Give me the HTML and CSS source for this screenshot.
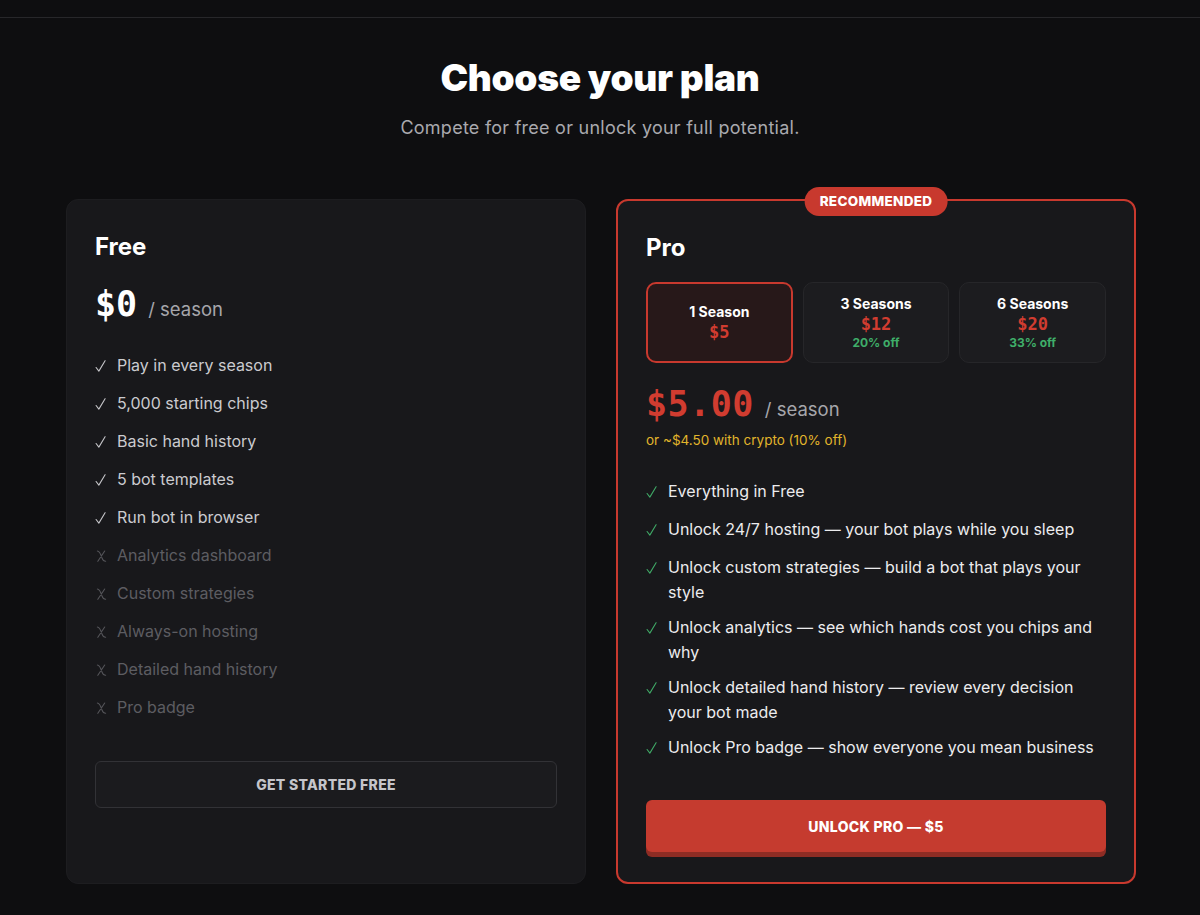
FILE: index.html
```html
<!DOCTYPE html>
<html lang="en">
<head>
<meta charset="utf-8">
<title>Choose your plan</title>
<link rel="stylesheet" href="styles.css">
</head>
<body>
<header class="topbar"></header>
<main class="main">
  <h1 class="title">Choose your plan</h1>
  <p class="subtitle">Compete for free or unlock your full potential.</p>

  <div class="plans">
    <section class="card card-free">
      <h2 class="plan-name">Free</h2>
      <div class="price-row">
        <span class="price">$0</span>
        <span class="per">/ season</span>
      </div>
      <ul class="features">
        <li class="feat"><svg class="mark" viewBox="0 0 12 14"><path d="M1.2 8.6 L4.2 12.6 L11 1.2"/></svg><span>Play in every season</span></li>
        <li class="feat"><svg class="mark" viewBox="0 0 12 14"><path d="M1.2 8.6 L4.2 12.6 L11 1.2"/></svg><span>5,000 starting chips</span></li>
        <li class="feat"><svg class="mark" viewBox="0 0 12 14"><path d="M1.2 8.6 L4.2 12.6 L11 1.2"/></svg><span>Basic hand history</span></li>
        <li class="feat"><svg class="mark" viewBox="0 0 12 14"><path d="M1.2 8.6 L4.2 12.6 L11 1.2"/></svg><span>5 bot templates</span></li>
        <li class="feat"><svg class="mark" viewBox="0 0 12 14"><path d="M1.2 8.6 L4.2 12.6 L11 1.2"/></svg><span>Run bot in browser</span></li>
        <li class="feat off"><svg class="mark" viewBox="0 0 12 14"><path d="M1.5 1.5 C4 1.5 5.5 6 6.5 9 C7.2 11 8 12.8 10.5 12.8 M9.5 1.5 L2 12.8"/></svg><span>Analytics dashboard</span></li>
        <li class="feat off"><svg class="mark" viewBox="0 0 12 14"><path d="M1.5 1.5 C4 1.5 5.5 6 6.5 9 C7.2 11 8 12.8 10.5 12.8 M9.5 1.5 L2 12.8"/></svg><span>Custom strategies</span></li>
        <li class="feat off"><svg class="mark" viewBox="0 0 12 14"><path d="M1.5 1.5 C4 1.5 5.5 6 6.5 9 C7.2 11 8 12.8 10.5 12.8 M9.5 1.5 L2 12.8"/></svg><span>Always-on hosting</span></li>
        <li class="feat off"><svg class="mark" viewBox="0 0 12 14"><path d="M1.5 1.5 C4 1.5 5.5 6 6.5 9 C7.2 11 8 12.8 10.5 12.8 M9.5 1.5 L2 12.8"/></svg><span>Detailed hand history</span></li>
        <li class="feat off"><svg class="mark" viewBox="0 0 12 14"><path d="M1.5 1.5 C4 1.5 5.5 6 6.5 9 C7.2 11 8 12.8 10.5 12.8 M9.5 1.5 L2 12.8"/></svg><span>Pro badge</span></li>
      </ul>
      <button class="btn btn-free">GET STARTED FREE</button>
    </section>

    <section class="card card-pro">
      <span class="badge">RECOMMENDED</span>
      <h2 class="plan-name">Pro</h2>
      <div class="seasons">
        <div class="season selected">
          <span class="s-name">1 Season</span>
          <span class="s-price">$5</span>
        </div>
        <div class="season">
          <span class="s-name">3 Seasons</span>
          <span class="s-price">$12</span>
          <span class="s-off">20% off</span>
        </div>
        <div class="season">
          <span class="s-name">6 Seasons</span>
          <span class="s-price">$20</span>
          <span class="s-off">33% off</span>
        </div>
      </div>
      <div class="price-row pro-price-row">
        <span class="price price-red">$5.00</span>
        <span class="per">/ season</span>
      </div>
      <p class="crypto">or ~$4.50 with crypto (10% off)</p>
      <ul class="features pro-features">
        <li class="feat"><svg class="mark" viewBox="0 0 12 14"><path d="M1.2 8.6 L4.2 12.6 L11 1.2"/></svg><span>Everything in Free</span></li>
        <li class="feat"><svg class="mark" viewBox="0 0 12 14"><path d="M1.2 8.6 L4.2 12.6 L11 1.2"/></svg><span>Unlock 24/7 hosting — your bot plays while you sleep</span></li>
        <li class="feat"><svg class="mark" viewBox="0 0 12 14"><path d="M1.2 8.6 L4.2 12.6 L11 1.2"/></svg><span>Unlock custom strategies — build a bot that plays your style</span></li>
        <li class="feat"><svg class="mark" viewBox="0 0 12 14"><path d="M1.2 8.6 L4.2 12.6 L11 1.2"/></svg><span>Unlock analytics — see which hands cost you chips and why</span></li>
        <li class="feat"><svg class="mark" viewBox="0 0 12 14"><path d="M1.2 8.6 L4.2 12.6 L11 1.2"/></svg><span>Unlock detailed hand history — review every decision your bot made</span></li>
        <li class="feat"><svg class="mark" viewBox="0 0 12 14"><path d="M1.2 8.6 L4.2 12.6 L11 1.2"/></svg><span>Unlock Pro badge — show everyone you mean business</span></li>
      </ul>
      <button class="btn btn-pro">UNLOCK PRO — $5</button>
    </section>
  </div>
</main>
</body>
</html>
```

FILE: styles.css
```css
* { box-sizing: border-box; }

html, body {
  margin: 0;
  padding: 0;
  background: #0e0e10;
  color: #e8e8ea;
  font-family: Inter, "Noto Sans", "Liberation Sans", sans-serif;
}

.topbar {
  height: 18px;
  border-bottom: 1px solid #27272a;
}

.main {
  width: 1070px;
  margin: 0 auto;
  padding-top: 38px;
  display: flex;
  flex-direction: column;
  align-items: center;
}

.title {
  margin: 0;
  font-size: 37px;
  line-height: 44px;
  font-weight: 900;
  letter-spacing: -0.3px;
  color: #ffffff;
}

.subtitle {
  margin: 14px 0 0;
  font-size: 18px;
  line-height: 28px;
  letter-spacing: 0.25px;
  color: #a9a9ae;
}

.plans {
  margin-top: 57px;
  width: calc(100% + 1px);
  align-self: flex-start;
  display: grid;
  grid-template-columns: 1fr 1fr;
  gap: 30px;
  padding-left: 1px;
}

.card {
  position: relative;
  background: #18181b;
  border: 1px solid #1d1d20;
  border-radius: 12px;
  padding: 29px 28px 30px;
  display: flex;
  flex-direction: column;
}

.card-pro {
  border: 2px solid #c8392e;
}

.badge {
  position: absolute;
  top: -14px;
  left: 50%;
  transform: translateX(-50%);
  background: #c8392e;
  color: #ffffff;
  font-size: 13.5px;
  font-weight: 800;
  letter-spacing: 0.3px;
  line-height: 29px;
  height: 29px;
  padding: 0 15px;
  border-radius: 15px;
  white-space: nowrap;
}

.plan-name {
  margin: 0;
  font-size: 24px;
  line-height: 36px;
  font-weight: 700;
  color: #ffffff;
}

.price-row {
  margin-top: 17px;
  display: flex;
  align-items: baseline;
  gap: 11px;
  height: 44px;
}

.price {
  font-family: "DejaVu Sans Mono", "Liberation Mono", monospace;
  font-size: 35px;
  line-height: 44px;
  font-weight: 700;
  color: #ffffff;
}

.price-red {
  color: #d13c30;
  letter-spacing: 0.5px;
}

.per {
  font-size: 18.5px;
  color: #a6a6ab;
}

.features {
  list-style: none;
  margin: 27px 0 0;
  padding: 0;
  display: flex;
  flex-direction: column;
  gap: 11px;
}

.feat {
  display: flex;
  align-items: flex-start;
  min-height: 27px;
  font-size: 16px;
  line-height: 24px;
  color: #cbcbcf;
}

.feat .mark {
  flex: 0 0 auto;
  width: 11px;
  height: 14px;
  margin: 6px 11px 0 0;
  fill: none;
  stroke: #c4c4c8;
  stroke-width: 1.2;
  stroke-linecap: round;
  stroke-linejoin: round;
}

.feat.off {
  color: #5d5d62;
}

.feat.off .mark {
  stroke: #55555a;
  margin-left: 1px;
  margin-right: 10px;
}

.btn {
  font-family: inherit;
  cursor: pointer;
  width: 100%;
  font-size: 14px;
  font-weight: 800;
  letter-spacing: 0.3px;
}

.btn-free {
  margin-top: 39px;
  height: 47px;
  background: #1b1b1e;
  border: 1px solid #323236;
  border-radius: 6px;
  color: #c5c5ca;
}

.seasons {
  margin-top: 16px;
  display: grid;
  grid-template-columns: repeat(3, 1fr);
  gap: 10px;
}

.season {
  height: 81px;
  background: #1c1c1f;
  border: 1px solid #262629;
  border-radius: 10px;
  display: flex;
  flex-direction: column;
  align-items: center;
  justify-content: center;
}

.season.selected {
  background: #271819;
  border: 2px solid #c8392e;
}

.s-name {
  font-size: 14px;
  line-height: 18px;
  font-weight: 700;
  color: #ffffff;
}

.s-price {
  font-family: "DejaVu Sans Mono", "Liberation Mono", monospace;
  font-size: 17px;
  line-height: 22px;
  font-weight: 700;
  color: #d13c30;
}

.s-off {
  font-size: 12px;
  line-height: 16px;
  font-weight: 700;
  color: #3fae69;
}

.pro-price-row {
  margin-top: 19px;
}

.crypto {
  margin: 4px 0 0;
  font-size: 13.5px;
  line-height: 20px;
  color: #e2b52b;
}

.pro-features {
  margin-top: 29px;
}

.pro-features .feat {
  color: #ececee;
  line-height: 24.5px;
}

.pro-features .feat .mark {
  stroke: #3fa866;
}

.btn-pro {
  margin-top: 38px;
  height: 52px;
  background: #c53b2f;
  border: none;
  border-radius: 6px;
  color: #ffffff;
  box-shadow: 0 5px 0 #8e2c24;
}
```
